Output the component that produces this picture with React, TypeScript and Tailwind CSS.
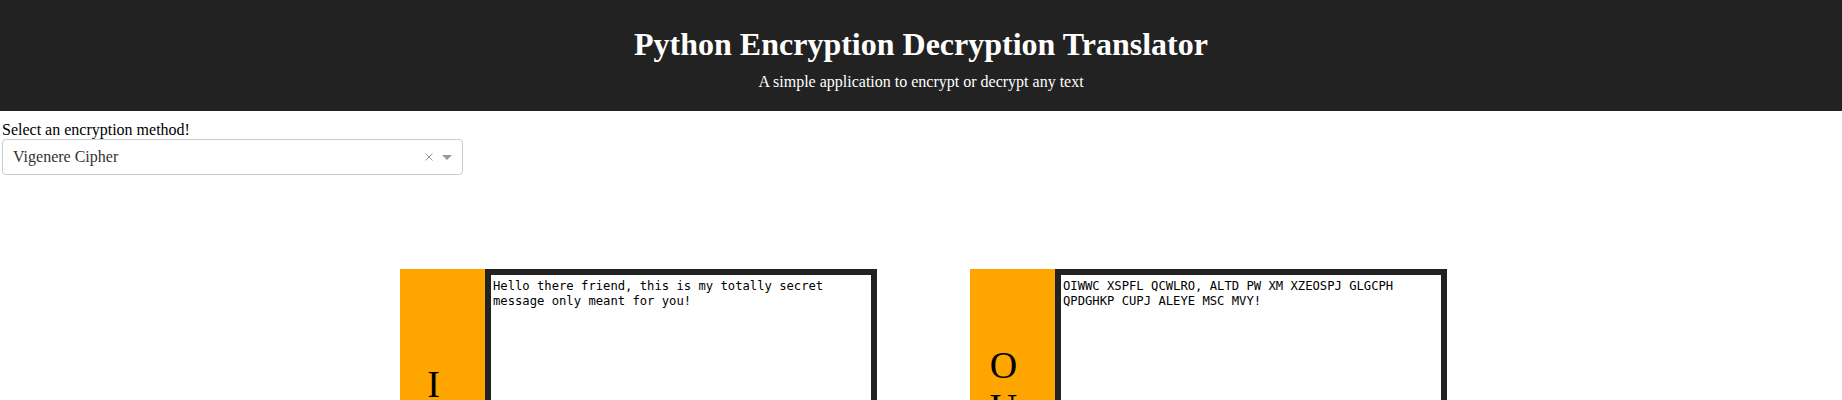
import { useState } from "react";

function Panel({ label, text, height }: { label: string; text: string; height: string }) {
  return (
    <div className={`flex ${height}`}>
      <div className="flex w-[85px] flex-col items-center justify-center bg-[#ffa500] pr-[18px] text-[38px] leading-[42px] text-black">
        {label.split("").map((ch, i) => (
          <span key={i}>{ch}</span>
        ))}
      </div>
      <textarea
        readOnly
        value={text}
        className="h-full w-[392px] resize-none border-[6px] border-[#222222] bg-white px-[2px] pt-[3.5px] font-['DejaVu_Sans_Mono',monospace] text-[12.2px] leading-[15.7px] text-black outline-none"
      />
    </div>
  );
}

export default function App() {
  const [method] = useState("Vigenere Cipher");

  return (
    <div className="min-h-screen bg-white font-['Liberation_Serif',serif] text-black">
      <header className="h-[111px] bg-[#222222] pt-[27px] text-center text-white">
        <h1 className="text-[32px] font-bold leading-[35px]">Python Encryption Decryption Translator</h1>
        <p className="mt-[11px] text-[16px] leading-[18px]">A simple application to encrypt or decrypt any text</p>
      </header>

      <div className="px-[2px] pt-[10px]">
        <label className="block text-[16px] leading-[18px]">Select an encryption method!</label>
        <div className="flex h-[36px] w-[461px] items-center rounded-[4px] border border-[#cccccc] bg-white pl-[10px]">
          <span className="flex-1 text-[16px] text-[#333333]">{method}</span>
          <span className="flex w-[17px] items-center justify-center">
            <svg width="8" height="8" viewBox="0 0 8 8">
              <path d="M0.5 0.5L7.5 7.5M7.5 0.5L0.5 7.5" stroke="#999999" strokeWidth="1" />
            </svg>
          </span>
          <span className="flex w-[25px] items-center justify-center pr-[5px]">
            <span className="h-0 w-0 border-x-[5px] border-t-[5px] border-x-transparent border-t-[#999999]" />
          </span>
        </div>
      </div>

      <div className="mt-[94px] flex justify-center gap-[93px] pl-[5px]">
        <Panel
          label="INPUT"
          height="h-[397px]"
          text="Hello there friend, this is my totally secret message only meant for you!"
        />
        <Panel
          label="OUTPUT"
          height="h-[401px]"
          text="OIWWC XSPFL QCWLRO, ALTD PW XM XZEOSPJ GLGCPH QPDGHKP CUPJ ALEYE MSC MVY!"
        />
      </div>
    </div>
  );
}
